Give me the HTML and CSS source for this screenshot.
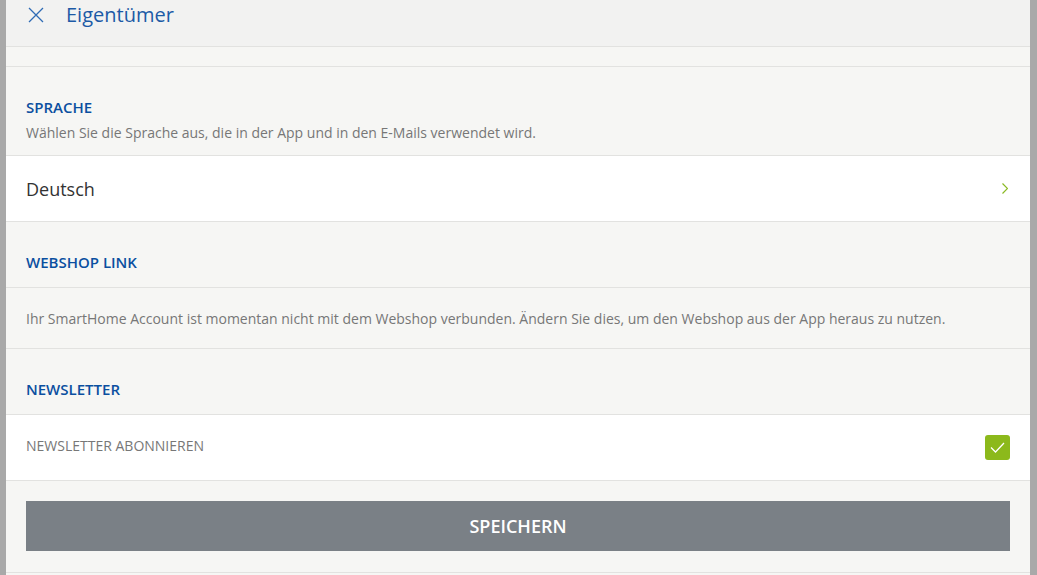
FILE: index.html
```html
<!DOCTYPE html>
<html lang="de">
<head>
    <meta charset="UTF-8">
    <meta name="viewport" content="width=device-width, initial-scale=1.0">
    <title>Eigentümer</title>
    <link rel="stylesheet" href="styles.css">
</head>
<body>

    <div class="panel">
        <div class="header">
            <svg class="close" width="16" height="16" viewBox="0 0 16 16">
                <path d="M1 1 L15 15 M15 1 L1 15" stroke="#2f6cb5" stroke-width="1.3" fill="none"/>
            </svg>
            <span class="title">Eigentümer</span>
        </div>

        <div class="spacer"></div>

        <!-- Sprache -->
        <div class="section intro">
            <div class="section-title">SPRACHE</div>
            <div class="section-desc">Wählen Sie die Sprache aus, die in der App und in den E-Mails verwendet wird.</div>
        </div>
        <div class="row white">
            <span class="value">Deutsch</span>
            <svg class="chevron" width="6" height="11" viewBox="0 0 6 11">
                <path d="M0.5 0.5 L5.5 5.5 L0.5 10.5" stroke="#8ab923" stroke-width="1.2" fill="none"/>
            </svg>
        </div>

        <!-- Webshop -->
        <div class="section">
            <div class="section-title">WEBSHOP LINK</div>
        </div>
        <div class="row text-row">
            <span class="info">Ihr SmartHome Account ist momentan nicht mit dem Webshop verbunden. Ändern Sie dies, um den Webshop aus der App heraus zu nutzen.</span>
        </div>

        <!-- Newsletter -->
        <div class="section">
            <div class="section-title">NEWSLETTER</div>
        </div>
        <div class="row white">
            <span class="label">NEWSLETTER ABONNIEREN</span>
            <span class="checkbox">
                <svg width="25" height="25" viewBox="0 0 25 25">
                    <path d="M6 12.5 L10.5 17 L19 8" stroke="#fff" stroke-width="1.3" fill="none"/>
                </svg>
            </span>
        </div>

        <div class="actions">
            <button type="button">SPEICHERN</button>
        </div>
    </div>

</body>
</html>
```

FILE: styles.css
```css
body { margin: 0; background: #a9a9a9; font-family: "Open Sans", Arial, sans-serif; height: 575px; overflow: hidden; }
.panel { margin-left: 6px; width: 1024px; height: 575px; background: #f6f6f4; }

.header { height: 46px; background: #f2f2f1; border-bottom: 1px solid #e2e2e0; display: flex; align-items: center; padding: 0 20px 0 22px; }
.close { margin-top: -17px; }
.title { margin-left: 22px; margin-top: -17px; font-size: 20px; color: #1c5aa6; }

.spacer { height: 19px; border-bottom: 1px solid #e2e2e0; }

.section { padding: 30px 20px 0; box-sizing: border-box; height: 66px; border-bottom: 1px solid #e2e2e0; }
.section.intro { height: 89px; }
.section-title { font-size: 15px; line-height: 20px; font-weight: 600; color: #0b4fa0; }
.section-desc { font-size: 14px; line-height: 19px; color: #777; margin-top: 6px; }

.row { height: 65px; padding: 0 20px; border-bottom: 1px solid #e2e2e0; display: flex; align-items: center; justify-content: space-between; }
.row.white { background: #fff; }
.row.text-row { height: 60px; }
.value { font-size: 18px; color: #333; }
.chevron { margin-right: 2px; }
.info { font-size: 14px; color: #777; }
.label { font-size: 14px; color: #777; margin-top: -5px; }
.checkbox { width: 25px; height: 25px; background: #8cb91b; border-radius: 3px; display: flex; }

.actions { padding: 20px 20px 21px; border-bottom: 1px solid #e2e2e0; }
button { width: 100%; height: 50px; background: #7a8086; color: #fff; border: none; font-family: "Open Sans", Arial, sans-serif; font-size: 18px; font-weight: 600; display: block; padding: 0; }
```
